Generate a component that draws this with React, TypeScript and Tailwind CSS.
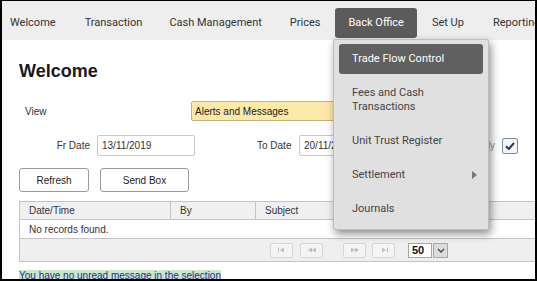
import React from "react";

const navFont = { fontFamily: "Roboto, 'Liberation Sans', sans-serif" };

function PagerBtn({ kind }: { kind: "first" | "prev" | "next" | "last" }) {
  const c = "#b8c0c8";
  return (
    <div className="w-[23px] h-[15px] border border-[#d6d6d6] bg-[#f4f4f4] rounded-[2px] flex items-center justify-center">
      <svg width="10" height="6" viewBox="0 0 10 6">
        {kind === "first" && (
          <g fill={c}>
            <rect x="1" y="0.5" width="1" height="5" />
            <polygon points="7,0.5 3,3 7,5.5" />
          </g>
        )}
        {kind === "prev" && (
          <g fill={c}>
            <polygon points="5,0.5 1,3 5,5.5" />
            <polygon points="9,0.5 5,3 9,5.5" />
          </g>
        )}
        {kind === "next" && (
          <g fill={c}>
            <polygon points="1,0.5 5,3 1,5.5" />
            <polygon points="5,0.5 9,3 5,5.5" />
          </g>
        )}
        {kind === "last" && (
          <g fill={c}>
            <polygon points="3,0.5 7,3 3,5.5" />
            <rect x="8" y="0.5" width="1" height="5" />
          </g>
        )}
      </svg>
    </div>
  );
}

export default function App() {
  const body = { fontFamily: "'Liberation Sans', Arial, sans-serif" };
  return (
    <div
      className="relative w-[537px] h-[281px] overflow-hidden bg-white border-t border-l-2 border-r-2 border-b-2 border-black"
      style={body}
    >
      {/* Top nav */}
      <div className="h-[39px] bg-[#eeeeee] flex items-start text-[11px] leading-[14px] text-[#333] whitespace-nowrap" style={navFont}>
        <div className="shrink-0 ml-[8px] mt-[15px]">Welcome</div>
        <div className="shrink-0 ml-[29px] mt-[15px]">Transaction</div>
        <div className="shrink-0 ml-[27px] mt-[15px]">Cash Management</div>
        <div className="shrink-0 ml-[28px] mt-[15px]">Prices</div>
        <div className="shrink-0 ml-[15px] mt-[7px] h-[30px] px-[13px] bg-[#5b5b5b] text-white rounded-[3px] flex items-center">
          Back Office
        </div>
        <div className="shrink-0 ml-[15px] mt-[15px]">Set Up</div>
        <div className="shrink-0 ml-[29px] mt-[15px]">Reporting</div>
      </div>

      {/* Content */}
      <div className="pl-[17px]">
        <div className="mt-[21px] text-[18px] leading-[21px] font-bold text-[#1a1a1a]">Welcome</div>

        {/* View row */}
        <div className="mt-[19px] flex items-center h-[20px] text-[10px] text-[#333] whitespace-nowrap">
          <div className="ml-[6px] w-[166px]">View</div>
          <div className="w-[160px] h-[20px] bg-[#fde9a8] border border-[#c9b27a] rounded-[2px] flex items-center pl-[3px] text-[#222]">
            <span className="flex-1">Alerts and Messages</span>
            <span className="w-[1px] h-[18px] bg-[#9a8a6a] mr-[16px]" />
          </div>
        </div>

        {/* Date row */}
        <div className="mt-[14px] flex items-center h-[21px] text-[10px] text-[#333] whitespace-nowrap">
          <div className="w-[71px] text-right">Fr Date</div>
          <div className="ml-[7px] w-[98px] h-[21px] border border-[#c8c8c8] rounded-[2px] flex items-center pl-[4px]">
            13/11/2019
          </div>
          <div className="ml-[62px] w-[35px]">To Date</div>
          <div className="ml-[7px] w-[98px] h-[21px] border border-[#c8c8c8] rounded-[2px] flex items-center pl-[4px]">
            20/11/2019
          </div>
          <div className="ml-[38px] w-[60px] text-right text-[#888]">Unread Only</div>
          <div className="ml-[7px] w-[16px] h-[16px] border border-[#7d8c9c] bg-[#f3f6f9] rounded-[2px] flex items-center justify-center">
            <svg width="10" height="8" viewBox="0 0 10 8">
              <path d="M1 4.2 L3.8 7 L9 1" stroke="#2b3b55" strokeWidth="2" fill="none" />
            </svg>
          </div>
        </div>

        {/* Buttons */}
        <div className="mt-[12px] flex gap-[11px] text-[10px] text-[#222]">
          <div className="w-[70px] h-[24px] border border-[#9a9a9a] rounded-[3px] bg-white flex items-center justify-center">
            Refresh
          </div>
          <div className="w-[89px] h-[24px] border border-[#9a9a9a] rounded-[3px] bg-white flex items-center justify-center">
            Send Box
          </div>
        </div>

        {/* Table */}
        <div className="mt-[9px] w-[520px] border border-[#c4c4c4] text-[10px] text-[#333]">
          <div className="h-[18px] bg-[#f0f0f0] flex items-center border-b border-[#c4c4c4]">
            <div className="w-[151px] h-full pl-[9px] flex items-center border-r border-[#c4c4c4]">Date/Time</div>
            <div className="w-[85px] h-full pl-[9px] flex items-center border-r border-[#c4c4c4]">By</div>
            <div className="pl-[9px]">Subject</div>
          </div>
          <div className="h-[19px] flex items-center pl-[9px] border-b border-[#c4c4c4]">No records found.</div>
          <div className="h-[22px] bg-[#efefef] flex items-center">
            <div className="ml-[250px] flex gap-[7px]">
              <PagerBtn kind="first" />
              <PagerBtn kind="prev" />
            </div>
            <div className="ml-[20px] flex gap-[6px]">
              <PagerBtn kind="next" />
              <PagerBtn kind="last" />
            </div>
            <div className="ml-[13px] w-[24px] h-[15px] bg-white border border-[#a8a8a8] flex items-center pl-[3px] font-bold text-[11px] text-[#111]">
              50
            </div>
            <div className="ml-[1px] w-[15px] h-[15px] bg-[#dcdcdc] border border-[#a8a8a8] flex items-center justify-center">
              <svg width="8" height="5" viewBox="0 0 8 5">
                <path d="M1 1 L4 4 L7 1" stroke="#444" strokeWidth="1.3" fill="none" />
              </svg>
            </div>
          </div>
        </div>

        <div className="inline-block h-[12px] leading-[12px] bg-[#c9e7c9] text-[#1f2aa0] text-[10px] whitespace-nowrap">
          You have no unread message in the selection
        </div>
      </div>

      {/* Dropdown menu */}
      <div
        className="absolute left-[331px] top-[38px] w-[156px] h-[191px] bg-[#e0e0e0] border border-[#bdbdbd] rounded-[2px] shadow-[2px_4px_8px_rgba(0,0,0,0.45)] px-[5px] pt-[4px] flex flex-col gap-[4px] text-[11px] leading-[14px] text-[#444] whitespace-nowrap"
        style={navFont}
      >
        <div className="h-[30px] bg-[#606060] text-white rounded-[3px] flex items-center pl-[13px]">Trade Flow Control</div>
        <div className="h-[44px] flex items-center pl-[13px]">
          Fees and Cash
          <br />
          Transactions
        </div>
        <div className="h-[30px] flex items-center pl-[13px]">Unit Trust Register</div>
        <div className="h-[30px] flex items-center pl-[13px] pr-[6px]">
          <span className="flex-1">Settlement</span>
          <svg width="5" height="8" viewBox="0 0 5 8">
            <polygon points="0,0 5,4 0,8" fill="#777" />
          </svg>
        </div>
        <div className="h-[30px] flex items-center pl-[13px]">Journals</div>
      </div>
    </div>
  );
}
